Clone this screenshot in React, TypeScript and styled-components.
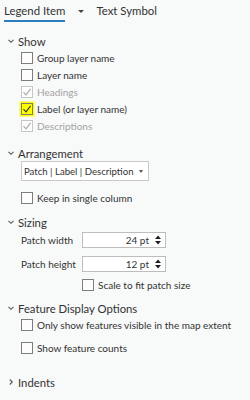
import React, { FunctionComponent } from 'react';
import styled, { createGlobalStyle } from 'styled-components';

const GlobalStyle = createGlobalStyle`
  html, body {
    margin: 0;
    padding: 0;
    background: #f8f9f9;
  }
  body {
    font-family: Lato, 'Noto Sans', sans-serif;
    color: #333;
    white-space: nowrap;
  }
`;

const Panel = styled.div`
  width: 250px;
  height: 400px;
  overflow: hidden;
  background: #f8f9f9;
`;

const TabBar = styled.div`
  display: flex;
  align-items: flex-start;
  height: 24px;
  padding-left: 4px;
`;

const Tab = styled.div<{ $active?: boolean }>`
  font-size: 11.4px;
  line-height: 14px;
  padding-top: 4px;
  height: 16px;
  color: #333;
  border-bottom: 2px solid ${(p) => (p.$active ? '#2e7cc0' : 'transparent')};
`;

const TabMenu = styled.div`
  width: 0;
  height: 0;
  margin: 10px 12px 0 13px;
  border-left: 3px solid transparent;
  border-right: 3px solid transparent;
  border-top: 3px solid #444;
`;

const Section = styled.div<{ $gap: number }>`
  margin-top: ${(p) => p.$gap}px;
  padding-left: 8px;
`;

const Header = styled.div`
  display: flex;
  align-items: center;
  height: 16px;
  font-size: 11.3px;
  color: #333;
`;

const Chevron = styled.svg`
  width: 6px;
  height: 6px;
  margin-right: 4px;
  flex: none;
`;

const Body = styled.div`
  padding-left: 13px;
`;

const CheckRow = styled.label<{ $gap?: number; $disabled?: boolean }>`
  display: flex;
  align-items: center;
  height: 17px;
  margin-top: ${(p) => p.$gap || 0}px;
  font-size: 10px;
  color: ${(p) => (p.$disabled ? '#a3a3a3' : '#333')};
`;

const Box = styled.span<{ $disabled?: boolean; $highlight?: boolean }>`
  display: flex;
  align-items: center;
  justify-content: center;
  box-sizing: border-box;
  width: 12px;
  height: 12px;
  margin-right: 4px;
  flex: none;
  background: ${(p) => (p.$highlight ? '#ffff00' : '#fdfdfd')};
  border: 1px solid ${(p) => (p.$disabled ? '#c6c6c6' : '#7d7d7d')};
  box-shadow: ${(p) => (p.$highlight ? '0 0 0 1.5px #ffff00' : 'none')};
`;

const Select = styled.div`
  display: flex;
  align-items: center;
  justify-content: space-between;
  box-sizing: border-box;
  width: 128px;
  height: 20px;
  padding: 0 5px 0 2px;
  background: #fff;
  border: 1px solid #c9c9c9;
  font-size: 9.6px;
  color: #333;
`;

const Caret = styled.span`
  width: 0;
  height: 0;
  border-left: 2.5px solid transparent;
  border-right: 2.5px solid transparent;
  border-top: 3px solid #555;
`;

const FieldRow = styled.div<{ $gap: number }>`
  display: flex;
  align-items: center;
  height: 16px;
  margin-top: ${(p) => p.$gap}px;
  font-size: 10px;
`;

const FieldLabel = styled.span`
  width: 61px;
  color: #333;
`;

const NumberBox = styled.div`
  display: flex;
  align-items: center;
  justify-content: flex-end;
  box-sizing: border-box;
  width: 84px;
  height: 16px;
  padding-right: 4px;
  background: #fff;
  border: 1px solid #bdbdbd;
  color: #333;
`;

const Spin = styled.svg`
  width: 6px;
  height: 10px;
  margin-left: 6px;
`;

const Indent = styled.div`
  padding-left: 61px;
`;

const Check: FunctionComponent<{ disabled?: boolean }> = ({ disabled }) => (
  <svg width="10" height="10" viewBox="0 0 10 10">
    <path d="M1.5 5.2 L4 7.8 L8.6 1.8" fill="none" stroke={disabled ? '#a8a8a8' : '#333'} strokeWidth="1.1" />
  </svg>
);

const Checkbox: FunctionComponent<{
  label: string;
  checked?: boolean;
  disabled?: boolean;
  highlight?: boolean;
  gap?: number;
}> = ({ label, checked, disabled, highlight, gap }) => (
  <CheckRow $gap={gap} $disabled={disabled}>
    <Box $disabled={disabled} $highlight={highlight}>
      {checked && <Check disabled={disabled} />}
    </Box>
    {label}
  </CheckRow>
);

const SectionHeader: FunctionComponent<{ title: string; open?: boolean }> = ({ title, open = true }) => (
  <Header>
    <Chevron viewBox="0 0 6 6">
      {open ? (
        <path d="M0.5 1.8 L3 4.3 L5.5 1.8" fill="none" stroke="#555" strokeWidth="1.1" />
      ) : (
        <path d="M1.8 0.5 L4.3 3 L1.8 5.5" fill="none" stroke="#555" strokeWidth="1.1" />
      )}
    </Chevron>
    {title}
  </Header>
);

const Spinner = () => (
  <Spin viewBox="0 0 6 10">
    <path d="M0 4 L3 0.5 L6 4 Z" fill="#222" />
    <path d="M0 6 L3 9.5 L6 6 Z" fill="#222" />
  </Spin>
);

const App = () => (
  <Panel>
    <GlobalStyle />
    <TabBar>
      <Tab $active>Legend Item</Tab>
      <TabMenu />
      <Tab>Text Symbol</Tab>
    </TabBar>

    <Section $gap={9}>
      <SectionHeader title="Show" />
      <Body>
        <Checkbox label="Group layer name" />
        <Checkbox label="Layer name" />
        <Checkbox label="Headings" checked disabled />
        <Checkbox label="Label (or layer name)" checked highlight />
        <Checkbox label="Descriptions" checked disabled />
      </Body>
    </Section>

    <Section $gap={11}>
      <SectionHeader title="Arrangement" />
      <Body>
        <Select>
          Patch | Label | Description
          <Caret />
        </Select>
        <Checkbox label="Keep in single column" gap={8} />
      </Body>
    </Section>

    <Section $gap={8}>
      <SectionHeader title="Sizing" />
      <Body>
        <FieldRow $gap={2}>
          <FieldLabel>Patch width</FieldLabel>
          <NumberBox>
            24 pt
            <Spinner />
          </NumberBox>
        </FieldRow>
        <FieldRow $gap={8}>
          <FieldLabel>Patch height</FieldLabel>
          <NumberBox>
            12 pt
            <Spinner />
          </NumberBox>
        </FieldRow>
        <Indent>
          <Checkbox label="Scale to fit patch size" gap={4} />
        </Indent>
      </Body>
    </Section>

    <Section $gap={7}>
      <SectionHeader title="Feature Display Options" />
      <Body>
        <Checkbox label="Only show features visible in the map extent" />
        <Checkbox label="Show feature counts" gap={6} />
      </Body>
    </Section>

    <Section $gap={18}>
      <SectionHeader title="Indents" open={false} />
    </Section>
  </Panel>
);

export default App;
